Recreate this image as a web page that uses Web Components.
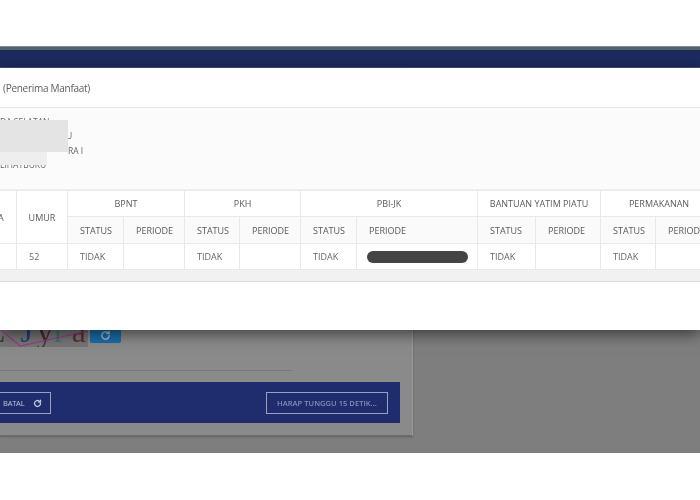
<!DOCTYPE html>
<html lang="id">
<head>
<meta charset="utf-8">
<title>Penerima Manfaat</title>
<style>
    html, body { margin: 0; padding: 0; background: #fff; }
    body { width: 700px; height: 500px; overflow: hidden; font-family: "Open Sans", "Liberation Sans", sans-serif; }
</style>
</head>
<body>
<cek-halaman>
    <form-captcha slot="form"></form-captcha>
    <modal-manfaat slot="modal">
        <span slot="judul">(Penerima Manfaat)</span>
        <alamat-sensor slot="alamat"></alamat-sensor>
        <tabel-manfaat slot="tabel"></tabel-manfaat>
    </modal-manfaat>
</cek-halaman>

<script>
class CekHalaman extends HTMLElement {
    constructor() {
        super();
        this.attachShadow({ mode: 'open' });
    }

    connectedCallback() {
        this.shadowRoot.innerHTML = `
        <style>
            :host { display: block; position: relative; width: 700px; height: 500px; overflow: hidden; background: #fff; filter: blur(.3px); }
            .atas { height: 46px; }
            .garis { height: 4px; box-sizing: border-box; background: #54626c; border-top: 1px solid #7d8c8c; }
            .navbar { height: 18px; background: #1c2a5e; border-bottom: 1px solid #4a5078; box-sizing: border-box; }
            .gelap { height: 385px; background: #7e7e7e; }
            .modal { position: absolute; left: 0; right: 0; top: 68px; }
        </style>
        <div class="atas"></div>
        <div class="garis"></div>
        <div class="navbar"></div>
        <div class="gelap"><slot name="form"></slot></div>
        <div class="modal"><slot name="modal"></slot></div>
        `;
    }
}

class FormCaptcha extends HTMLElement {
    constructor() {
        super();
        this.attachShadow({ mode: 'open' });
    }

    connectedCallback() {
        this.shadowRoot.innerHTML = `
        <style>
            :host { display: block; width: 413px; height: 368px; box-sizing: border-box; padding-top: 239px; background: #8a8a8a; border-right: 1px solid #9a9a9a; border-bottom: 1px solid #6c6c6c; box-shadow: 0 1px 2px rgba(0,0,0,.25); font-family: "Open Sans", "Liberation Sans", sans-serif; }
            .baris { display: flex; gap: 2px; height: 40px; }
            .captcha { position: relative; width: 88px; background: #757575; overflow: hidden; font: 32px/1 "Liberation Serif", serif; }
            .captcha svg { position: absolute; inset: 0; }
            .huruf { display: flex; height: 100%; align-items: flex-end; box-sizing: border-box; }
            .huruf span { display: block; }
            .segar { width: 31px; height: 36px; background: #1b6ca8; border-radius: 2px; display: flex; align-items: flex-end; justify-content: center; padding-bottom: 2px; box-sizing: border-box; }
            .garis { width: 292px; height: 1px; background: #787878; margin-top: 23px; }
            .bar { width: 400px; height: 41px; margin-top: 11px; background: #1f2c6e; box-sizing: border-box; padding: 10px 12px 9px 0; display: flex; justify-content: space-between; align-items: stretch; }
            .tombol { display: flex; align-items: center; box-sizing: border-box; border: 1px solid #9ba1bb; font-size: 7.5px; }
            .batal { width: 51px; color: #c3c7d6; padding-left: 3px; gap: 9px; border-left: 0; letter-spacing: -.2px; }
            .tunggu { width: 122px; justify-content: center; color: #878eb4; font-weight: 600; letter-spacing: .05px; }
        </style>
        <div class="baris">
            <div class="captcha">
                <div class="huruf">
                    <span style="color:#3b3b3b;margin-left:-14px">L</span>
                    <span style="color:#2b3a78;margin-left:15px">J</span>
                    <span style="color:#4a2a30;margin-left:4px">y</span>
                    <span style="color:#3f6f74;margin-left:1px">r</span>
                    <span style="color:#5a3232;margin-left:7px">a</span>
                </div>
                <svg width="88" height="40" viewBox="0 0 88 40" fill="none">
                    <path d="M0 22 20 39 52 32 88 24" stroke="#9a3a88" stroke-width="1.2"></path>
                </svg>
            </div>
            <div class="segar">
                <svg width="11" height="11" viewBox="0 0 24 24" fill="none" stroke="#9fc3dc" stroke-width="3" stroke-linecap="round" stroke-linejoin="round">
                    <path d="M20 12a8 8 0 1 1-2.6-5.9"></path>
                    <path d="M20 3v5h-5"></path>
                </svg>
            </div>
        </div>
        <div class="garis"></div>
        <div class="bar">
            <div class="tombol batal">
                <span>BATAL</span>
                <svg width="9" height="9" viewBox="0 0 24 24" fill="none" stroke="#c3c7d6" stroke-width="3.5" stroke-linecap="round">
                    <path d="M20 12a8 8 0 1 1-3-6.2"></path>
                    <path d="M20 3v5h-5"></path>
                </svg>
            </div>
            <div class="tombol tunggu">HARAP TUNGGU 15 DETIK...</div>
        </div>
        `;
    }
}

class ModalManfaat extends HTMLElement {
    constructor() {
        super();
        this.attachShadow({ mode: 'open' });
    }

    connectedCallback() {
        this.shadowRoot.innerHTML = `
        <style>
            :host { display: block; height: 262px; background: #fff; box-shadow: 0 4px 14px rgba(0,0,0,.55); font-family: "Open Sans", "Liberation Sans", sans-serif; color: #555; }
            .kepala { height: 40px; box-sizing: border-box; padding-left: 3px; display: flex; align-items: center; font-size: 10px; letter-spacing: -.28px; color: #5c5c5c; border-bottom: 1px solid #e8e8e8; }
            .isi { height: 82px; box-sizing: border-box; background: #fbfbfb; border-bottom: 1px solid #f0f0f0; }
        </style>
        <div class="kepala"><slot name="judul"></slot></div>
        <div class="isi"><slot name="alamat"></slot></div>
        <slot name="tabel"></slot>
        `;
    }
}

class AlamatSensor extends HTMLElement {
    constructor() {
        super();
        this.attachShadow({ mode: 'open' });
    }

    connectedCallback() {
        this.shadowRoot.innerHTML = `
        <style>
            :host { display: block; position: relative; height: 100%; box-sizing: border-box; padding-top: 7px; font-size: 8.5px; line-height: 14.3px; color: #666; overflow: hidden; }
            .u { padding-left: 66px; }
            .ra { padding-left: 68px; }
            .sensor { position: absolute; left: 0; filter: blur(.6px); }
            .satu { top: 12px; width: 68px; height: 32px; background: #e4e4e4; }
            .dua { top: 12px; width: 47px; height: 45px; background: #eeeeee; }
        </style>
        <div>DA SELATAN</div>
        <div class="u">U</div>
        <div class="ra">RA I</div>
        <div>LIHATBUKU</div>
        <div class="sensor dua"></div>
        <div class="sensor satu"></div>
        `;
    }
}

class TabelManfaat extends HTMLElement {
    constructor() {
        super();
        this.attachShadow({ mode: 'open' });
    }

    connectedCallback() {
        const program = ['BPNT', 'PKH', 'PBI-JK', 'BANTUAN YATIM PIATU', 'PERMAKANAN'];
        const lebar = [52, 51, 56, 61, 55, 61, 56, 121, 58, 65, 55, 62];

        const kolom = lebar.map(l => `<col style="width:${l}px">`).join('');
        const kepala = program.map(p => `<th colspan="2">${p}</th>`).join('');
        const sub = program.map(() => `<th class="sub">STATUS</th><th class="sub">PERIODE</th>`).join('');
        const isi = program.map(p => {
            const periode = p === 'PBI-JK' ? '<span class="tutup"></span>' : '';
            return `<td>TIDAK</td><td class="periode">${periode}</td>`;
        }).join('');

        this.shadowRoot.innerHTML = `
        <style>
            :host { display: block; overflow: hidden; font-size: 9px; color: #5a5a5a; }
            table { table-layout: fixed; width: 753px; margin-left: -36px; border-collapse: collapse; background: #fff; }
            th, td { border: 1px solid #e9e9e9; padding: 0; font-weight: 400; text-align: center; height: 26px; white-space: nowrap; overflow: hidden; box-sizing: border-box; }
            th.sub { background: #fafafa; height: 27px; text-align: left; padding-left: 12px; }
            td { text-align: left; padding-left: 12px; color: #666; }
            td.periode { padding-left: 10px; }
            .tutup { display: block; width: 101px; height: 12px; border-radius: 6px; background: #444; }
            .gulir { height: 12px; box-sizing: border-box; background: #f1f1f1; border-bottom: 1px solid #dedede; }
        </style>
        <table>
            <colgroup>${kolom}</colgroup>
            <tr><th rowspan="2">NAMA</th><th rowspan="2">UMUR</th>${kepala}</tr>
            <tr>${sub}</tr>
            <tr><td></td><td>52</td>${isi}</tr>
        </table>
        <div class="gulir"></div>
        `;
    }
}

customElements.define('cek-halaman', CekHalaman);
customElements.define('form-captcha', FormCaptcha);
customElements.define('modal-manfaat', ModalManfaat);
customElements.define('alamat-sensor', AlamatSensor);
customElements.define('tabel-manfaat', TabelManfaat);
</script>
</body>
</html>
